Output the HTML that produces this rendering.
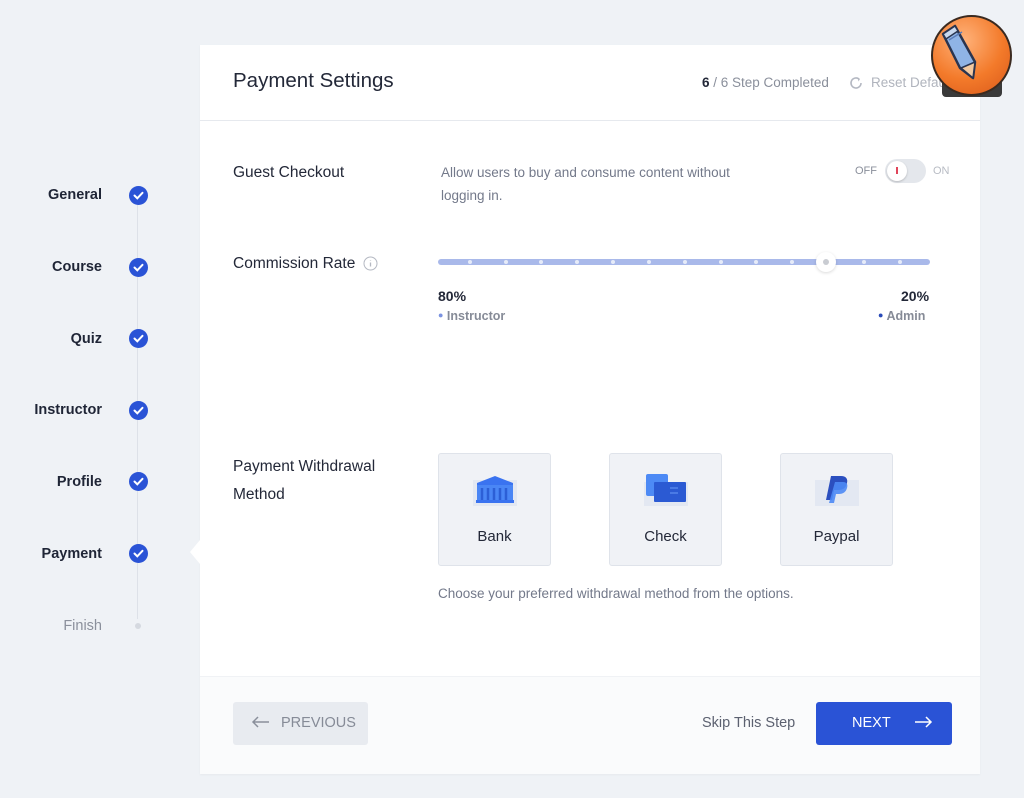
<!DOCTYPE html>
<html><head><meta charset="utf-8"><style>
*{box-sizing:border-box;margin:0;padding:0}
body{width:1024px;height:798px;background:#eff2f6;font-family:"Liberation Sans",sans-serif;position:relative;overflow:hidden;color:#1f2430}
.abs{position:absolute}
.step{position:absolute;right:922px;font-size:14.5px;font-weight:bold;color:#1f2536;text-align:right;white-space:nowrap}
.chk{position:absolute;left:129px;width:19px;height:19px;border-radius:50%;background:#2a53d6}
.chk svg{position:absolute;left:4px;top:5px}
.card{position:absolute;left:200px;top:45px;width:780px;height:729px;background:#fff;box-shadow:0 1px 2px rgba(0,0,0,.04)}
.lbl{position:absolute;font-size:15.5px;color:#232838}
.muted{color:#73798a}
.opt{position:absolute;top:408px;width:113px;height:113px;background:#f0f2f6;border:1px solid #dfe3ea;border-radius:3px;text-align:center}
.opt span{position:absolute;left:0;right:0;top:74px;font-size:15px;color:#232838}
.opt svg{position:absolute;left:32px;top:18px}
.tick{position:absolute;top:260px;width:4px;height:4px;border-radius:50%;background:#e6ebf8}
</style></head><body>

<div class="abs" style="left:137px;top:204px;width:1px;height:420px;background:#dde1e8"></div>
<div class="step" style="top:187px">General</div><div class="chk" style="top:186px"><svg width="11" height="9" viewBox="0 0 11 9"><path d="M1.5 4.5l2.8 2.8L9.5 1.8" stroke="#fff" stroke-width="2" fill="none" stroke-linecap="round"/></svg></div>
<div class="step" style="top:259px">Course</div><div class="chk" style="top:258px"><svg width="11" height="9" viewBox="0 0 11 9"><path d="M1.5 4.5l2.8 2.8L9.5 1.8" stroke="#fff" stroke-width="2" fill="none" stroke-linecap="round"/></svg></div>
<div class="step" style="top:331px">Quiz</div><div class="chk" style="top:329px"><svg width="11" height="9" viewBox="0 0 11 9"><path d="M1.5 4.5l2.8 2.8L9.5 1.8" stroke="#fff" stroke-width="2" fill="none" stroke-linecap="round"/></svg></div>
<div class="step" style="top:402px">Instructor</div><div class="chk" style="top:401px"><svg width="11" height="9" viewBox="0 0 11 9"><path d="M1.5 4.5l2.8 2.8L9.5 1.8" stroke="#fff" stroke-width="2" fill="none" stroke-linecap="round"/></svg></div>
<div class="step" style="top:474px">Profile</div><div class="chk" style="top:472px"><svg width="11" height="9" viewBox="0 0 11 9"><path d="M1.5 4.5l2.8 2.8L9.5 1.8" stroke="#fff" stroke-width="2" fill="none" stroke-linecap="round"/></svg></div>
<div class="step" style="top:546px">Payment</div><div class="chk" style="top:544px"><svg width="11" height="9" viewBox="0 0 11 9"><path d="M1.5 4.5l2.8 2.8L9.5 1.8" stroke="#fff" stroke-width="2" fill="none" stroke-linecap="round"/></svg></div>
<div class="step" style="top:618px;font-weight:normal;color:#8b909c">Finish</div>
<div class="abs" style="left:131px;top:619px;width:14px;height:14px;border-radius:50%;background:#eff2f6"></div>
<div class="abs" style="left:135px;top:623px;width:6px;height:6px;border-radius:50%;background:#d5d9e0"></div>

<div class="card">
  <div class="abs" style="left:-10px;top:495px;width:0;height:0;border-top:12px solid transparent;border-bottom:12px solid transparent;border-right:10px solid #fff"></div>
  <div class="abs" style="left:33px;top:24px;font-size:20.5px;color:#232838">Payment Settings</div>
  <div class="abs" style="left:502px;top:30px;font-size:13.5px;color:#8a8f9b"><b style="color:#232838">6</b> / 6 Step Completed</div>
  <svg class="abs" style="left:648px;top:30px" width="16" height="16" viewBox="0 0 16 16"><path d="M13 8a5 5 0 1 1-2-4" stroke="#b4b8c2" stroke-width="1.6" fill="none"/><path d="M9.5 2.5l2.5 1.5-1.5 2.5" fill="#b4b8c2"/></svg>
  <div class="abs" style="left:671px;top:30px;font-size:13.5px;color:#b0b4bd">Reset Default</div>
  <div class="abs" style="left:0;top:75px;width:780px;height:1px;background:#e6e9ee"></div>

  <div class="lbl" style="left:33px;top:119px">Guest Checkout</div>
  <div class="abs muted" style="left:241px;top:116px;font-size:13.5px;line-height:23px;width:330px">Allow users to buy and consume content without logging in.</div>
  <div class="abs" style="left:655px;top:120px;font-size:11px;color:#8a8f9b">OFF</div>
  <div class="abs" style="left:685px;top:114px;width:41px;height:24px;border-radius:12px;background:#e4e7ec"></div>
  <div class="abs" style="left:687px;top:116px;width:20px;height:20px;border-radius:50%;background:#fff;box-shadow:0 1px 2px rgba(0,0,0,.2)"></div>
  <div class="abs" style="left:696px;top:122px;width:2px;height:7px;background:#e0455a"></div>
  <div class="abs" style="left:733px;top:120px;font-size:11px;color:#b8bcc4">ON</div>

  <div class="lbl" style="left:33px;top:210px">Commission Rate</div>
  <svg class="abs" style="left:163px;top:211px" width="15" height="15" viewBox="0 0 15 15"><circle cx="7.5" cy="7.5" r="6.5" stroke="#b4b8c2" fill="none"/><path d="M7.5 6.5v4M7.5 4v.5" stroke="#b4b8c2" stroke-width="1.3"/></svg>
  <div class="abs" style="left:238px;top:214px;width:492px;height:6px;border-radius:3px;background:#a9b9ea"></div>
  <div class="tick" style="left:268px;top:215px"></div><div class="tick" style="left:304px;top:215px"></div><div class="tick" style="left:339px;top:215px"></div><div class="tick" style="left:375px;top:215px"></div><div class="tick" style="left:411px;top:215px"></div><div class="tick" style="left:447px;top:215px"></div><div class="tick" style="left:483px;top:215px"></div><div class="tick" style="left:519px;top:215px"></div><div class="tick" style="left:554px;top:215px"></div><div class="tick" style="left:590px;top:215px"></div><div class="tick" style="left:662px;top:215px"></div><div class="tick" style="left:698px;top:215px"></div>
  <div class="abs" style="left:616px;top:207px;width:20px;height:20px;border-radius:50%;background:#fff;box-shadow:0 1px 3px rgba(0,0,0,.15)"></div>
  <div class="abs" style="left:623px;top:214px;width:6px;height:6px;border-radius:50%;background:#c9ccd2"></div>
  <div class="abs" style="left:238px;top:243px;font-size:14px;font-weight:bold;color:#232838">80%</div>
  <div class="abs" style="left:238px;top:264px;font-size:12.5px;font-weight:bold;color:#868b97"><span style="color:#7b93e0;font-size:9px;vertical-align:2px">●</span> Instructor</div>
  <div class="abs" style="left:701px;top:243px;font-size:14px;font-weight:bold;color:#232838">20%</div>
  <div class="abs" style="left:678px;top:264px;font-size:12.5px;font-weight:bold;color:#868b97"><span style="color:#2a4bb8;font-size:9px;vertical-align:2px">●</span> Admin</div>

  <div class="lbl" style="left:33px;top:408px;line-height:28px">Payment Withdrawal<br>Method</div>
  <div class="opt" style="left:238px"><svg width="48" height="36" viewBox="0 0 48 36"><rect x="2" y="8" width="44" height="26" fill="#e3e8f2"/><path d="M24 4L6 11v3h36v-3z" fill="#3a73f0"/><rect x="6" y="13" width="36" height="18" fill="#4a86f5"/><path d="M11 16v12M17 16v12M23 16v12M29 16v12M35 16v12" stroke="#2c5fd6" stroke-width="2.5"/><rect x="5" y="28" width="38" height="3" fill="#3a73f0"/></svg><span>Bank</span></div>
  <div class="opt" style="left:409px"><svg width="48" height="36" viewBox="0 0 48 36"><rect x="2" y="10" width="44" height="24" fill="#e3e8f2"/><rect x="4" y="2" width="22" height="22" rx="2" fill="#4d8af5"/><rect x="12" y="10" width="32" height="20" rx="1" fill="#2b5ad3"/><path d="M28 16h8M28 21h8" stroke="#5d8ef0" stroke-width="1.2"/></svg><span>Check</span></div>
  <div class="opt" style="left:580px"><svg width="48" height="36" viewBox="0 0 48 36"><rect x="2" y="8" width="44" height="26" fill="#e3e8f2"/><path d="M18 4h10c5 0 7 3 6 7-1 5-4 7-9 7h-4l-2 10h-6z" fill="#2b4fbf"/><path d="M22 10h8c4 0 5 3 4 6-1 4-4 6-8 6h-3l-2 9h-5z" fill="#4d8af5" opacity=".9"/></svg><span>Paypal</span></div>
  <div class="abs muted" style="left:238px;top:541px;font-size:13.5px">Choose your preferred withdrawal method from the options.</div>

  <div class="abs" style="left:0;top:631px;width:780px;height:98px;background:#fafbfc;border-top:1px solid #f0f2f5"></div>
  <div class="abs" style="left:33px;top:657px;width:135px;height:43px;border-radius:3px;background:#e8ebf0"></div>
  <svg class="abs" style="left:51px;top:670px" width="19" height="14" viewBox="0 0 19 14"><path d="M18 7H2M7 2L2 7l5 5" stroke="#8a8f9b" stroke-width="1.5" fill="none"/></svg>
  <div class="abs" style="left:81px;top:670px;font-size:14.5px;color:#868b97">PREVIOUS</div>
  <div class="abs" style="left:502px;top:670px;font-size:14.5px;color:#5c6170">Skip This Step</div>
  <div class="abs" style="left:616px;top:657px;width:136px;height:43px;border-radius:3px;background:#2a53d6"></div>
  <div class="abs" style="left:652px;top:670px;font-size:14.5px;color:#fff">NEXT</div>
  <svg class="abs" style="left:714px;top:670px" width="19" height="14" viewBox="0 0 19 14"><path d="M1 7h16M12 2l5 5-5 5" stroke="#fff" stroke-width="1.5" fill="none"/></svg>
</div>

<div class="abs" style="left:942px;top:70px;width:60px;height:27px;border-radius:4px;background:#3a3a3a"></div>
<div class="abs" style="left:931px;top:15px;width:81px;height:81px;border-radius:50%;background:radial-gradient(circle at 40% 30%,#ffb27a,#f37a2a 55%,#d9581a);border:2px solid #3a2a20"></div>
<svg class="abs" style="left:938px;top:22px" width="60" height="60" viewBox="0 0 60 60"><path d="M5 12L17 4l20 36-2 16-13-10z" fill="#8fb4e6" stroke="#2a3550" stroke-width="2.5" stroke-linejoin="round"/><path d="M5 12l12-8 3 5-12 8z" fill="#c8d8ee" stroke="#2a3550" stroke-width="1.5"/><path d="M11 18l13-8" stroke="#5a7cb8" stroke-width="1.5"/><path d="M23 46l14-6-2 16z" fill="#f2c9a0" stroke="#2a3550" stroke-width="1.5"/></svg>
</body></html>
